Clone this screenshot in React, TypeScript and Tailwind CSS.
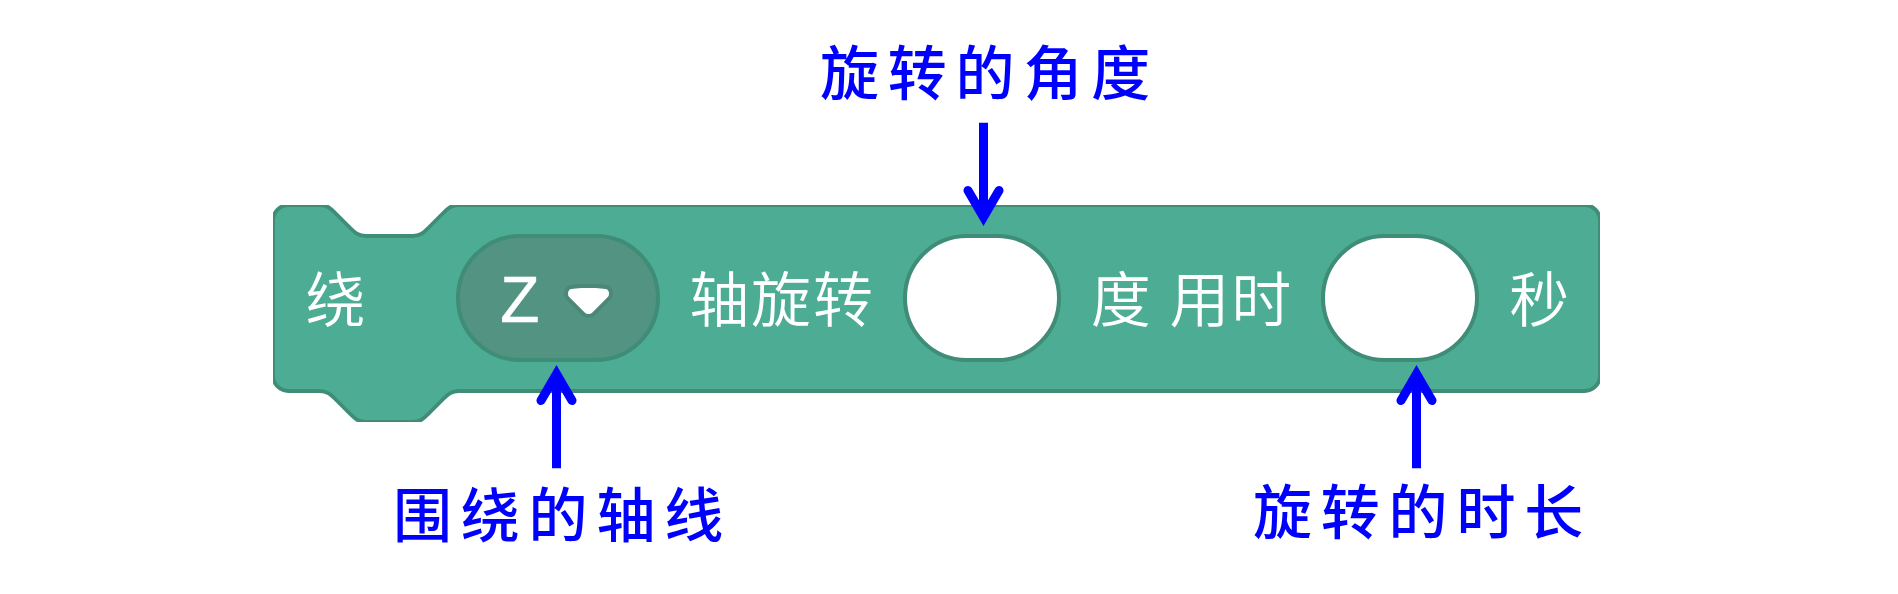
import type { ReactNode } from "react";

const OUTLINE =
  "M0,4 A4,4 0 0,1 4,0 H12 c2,0 3,1 4,2 l4,4 c1,1 2,2 4,2 h12 c2,0 3,-1 4,-2 l4,-4 c1,-1 2,-2 4,-2 H338.45 a4,4 0 0,1 4,4 V44 a4,4 0 0,1 -4,4 H48 c-2,0 -3,1 -4,2 l-4,4 c-1,1 -2,2 -4,2 h-12 c-2,0 -3,-1 -4,-2 l-4,-4 c-1,-1 -2,-2 -4,-2 H4 a4,4 0 0,1 -4,-4 z";

function Arrow({ down = false }: { down?: boolean }) {
  return (
    <svg
      className={down ? "block rotate-180" : "block"}
      width="41"
      height="104"
      viewBox="0 0 41 104"
      fill="none"
      stroke="#0000ff"
      strokeWidth="9"
    >
      <path d="M20.5 103.3V10" />
      <path d="M5 35.5L20.5 9L36 35.5" strokeLinecap="round" strokeLinejoin="miter" />
    </svg>
  );
}

function Caption({ children }: { children: ReactNode }) {
  return (
    <span className="-mr-[12px] block whitespace-nowrap font-['KaiTi','STKaiti','Noto_Sans_CJK_SC',sans-serif] text-[59px] font-medium leading-[60px] tracking-[8.8px] text-[#0000ff]">
      {children}
    </span>
  );
}

function Label({ children }: { children: ReactNode }) {
  return (
    <span className="-mt-[5px] block whitespace-pre text-[60px] leading-[62px] tracking-[1.8px]">{children}</span>
  );
}

function NumberInput() {
  return <div className="h-[128px] w-[158px] shrink-0 rounded-[64px] border-4 border-[#3f8c77] bg-white" />;
}

function AxisDropdown() {
  return (
    <div className="flex h-[128px] w-[204px] shrink-0 items-center rounded-[64px] border-4 border-[#3f8c77] bg-[#529382] pl-[40px]">
      <span className="mt-[4px] w-[64px] font-['Liberation_Sans',sans-serif] text-[64px] font-normal leading-[62px] [-webkit-text-stroke:0.5px_white]">Z</span>
      <svg className="mt-[5px] overflow-visible" width="49" height="34" viewBox="0 0 12.71 8.79">
        <path
          d="M12.71 2.44A2.41 2.41 0 0 1 12 4.16L8.08 8.08a2.45 2.45 0 0 1-3.45 0L.72 4.16A2.42 2.42 0 0 1 0 2.44 2.48 2.48 0 0 1 .71.71C1 .47 1.43 0 6.36 0S11.75.46 12 .71A2.44 2.44 0 0 1 12.71 2.44Z"
          fill="#231f20"
          opacity="0.1"
        />
        <path
          d="M6.36 7.79a1.43 1.43 0 0 1-1-.42L1.42 3.45a1.44 1.44 0 0 1 0-2c.56-.56 9.31-.56 9.87 0a1.44 1.44 0 0 1 0 2L7.37 7.37A1.43 1.43 0 0 1 6.36 7.79Z"
          fill="#fff"
        />
      </svg>
    </div>
  );
}

export default function App() {
  return (
    <main className="flex h-[594px] w-[1898px] flex-col overflow-hidden bg-white font-['Noto_Sans_CJK_SC',sans-serif]">
      <div className="flex h-[205px] flex-col items-center pl-[69px] pt-[40px]">
        <Caption>旋转的角度</Caption>
        <div className="z-10 mt-[22px] h-[104px] shrink-0">
          <Arrow down />
        </div>
      </div>

      <section className="relative ml-[273px] h-[217px] w-[1327px] shrink-0">
        <svg className="absolute inset-0" width="1327" height="217" viewBox="0 0 342.45 56">
          <path d={OUTLINE} fill="#4cad94" stroke="#3f8c77" strokeWidth="1" />
        </svg>
        <div className="relative flex h-[186px] items-center pl-[32.5px] font-[350] text-white">
          <Label>绕</Label>
          <div className="w-[89px]" />
          <AxisDropdown />
          <div className="w-[29px]" />
          <Label>轴旋转</Label>
          <div className="w-[28.5px]" />
          <NumberInput />
          <div className="w-[29.5px]" />
          <Label>度</Label>
          <div className="w-[17px]" />
          <Label>用时</Label>
          <div className="w-[28.2px]" />
          <NumberInput />
          <div className="w-[30px]" />
          <Label>秒</Label>
        </div>
      </section>

      <div className="z-10 -mt-[57px] flex pl-[391px]">
        <div className="flex w-[331px] flex-col items-center gap-[13px]">
          <Arrow />
          <Caption>围绕的轴线</Caption>
        </div>
        <div className="ml-[529px] flex w-[331px] flex-col items-center gap-[10px]">
          <Arrow />
          <Caption>旋转的时长</Caption>
        </div>
      </div>
    </main>
  );
}
